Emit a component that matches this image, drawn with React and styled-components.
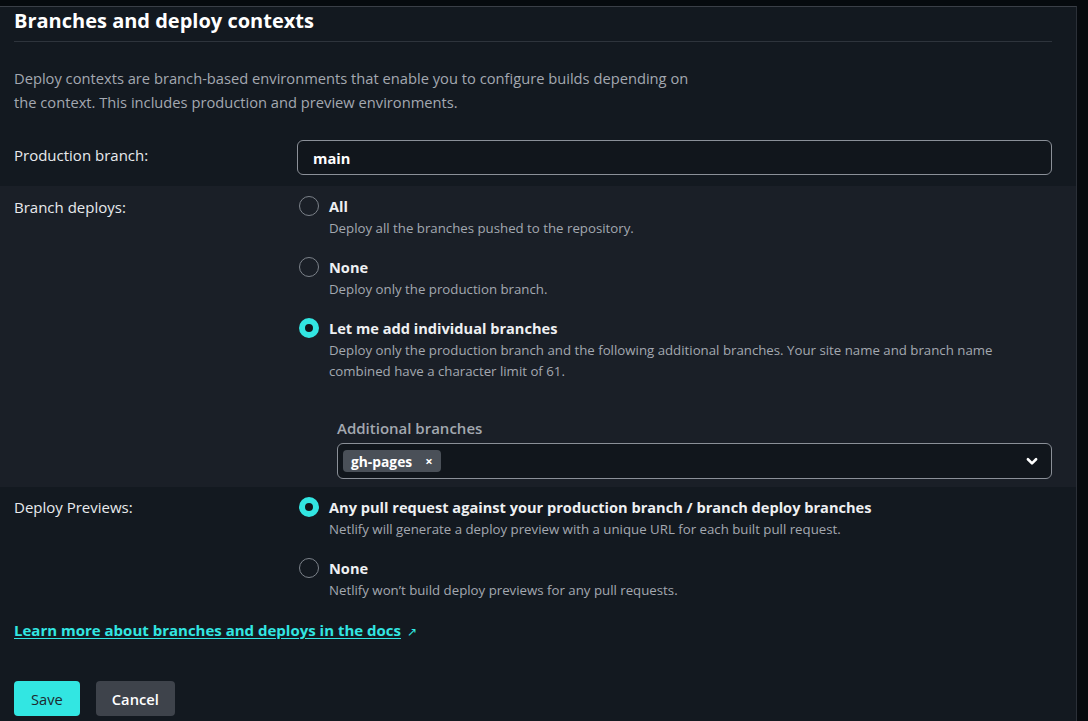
import React, { useState } from "react";
import styled, { createGlobalStyle } from "styled-components";

const GlobalStyle = createGlobalStyle`
  html, body {
    margin: 0;
    padding: 0;
    background: #060a0e;
  }
  body {
    font-family: "Open Sans", "Noto Sans", sans-serif;
    color: #e8eaed;
  }
  * { box-sizing: border-box; }
`;

const TEAL = "#32e6e2";

const Page = styled.div`
  padding-top: 6px;
  height: 721px;
  overflow: hidden;
`;

const Card = styled.section`
  width: 1077px;
  height: 715px;
  background: #131920;
  border-top: 1px solid #3a3f47;
  border-right: 1px solid #2b3038;
`;

const Header = styled.div`
  padding: 0 24px 0 14px;
`;

const Title = styled.h2`
  margin: 0;
  font-size: 20px;
  font-weight: 700;
  line-height: 26px;
  padding-top: 1px;
  padding-bottom: 7px;
  color: #fff;
  border-bottom: 1px solid #2e343c;
`;

const Description = styled.p`
  margin: 0;
  padding: 24px 0 0;
  max-width: 690px;
  font-size: 14.7px;
  line-height: 24px;
  color: #a3a8b0;
`;

const Row = styled.div`
  display: grid;
  grid-template-columns: 283px 1fr;
  padding: ${(p) => p.$pad || "8px 24px 8px 14px"};
  background: ${(p) => (p.$shaded ? "#1a1f27" : "transparent")};
`;

const Label = styled.div`
  font-size: 15px;
  line-height: 22px;
  padding-top: ${(p) => p.$top || "0px"};
  color: #e8eaed;
`;

const TextInput = styled.div`
  height: 35px;
  border: 1.5px solid #8b9098;
  border-radius: 6px;
  background: #11161c;
  padding: 0 15px;
  display: flex;
  align-items: center;
  font-size: 14.7px;
  font-weight: 700;
  color: #fff;
`;

const Options = styled.div`
  display: flex;
  flex-direction: column;
  gap: 16px;
`;

const Option = styled.label`
  display: grid;
  grid-template-columns: 20px 1fr;
  column-gap: 12px;
  cursor: pointer;
`;

const RadioDot = styled.span`
  width: 20px;
  height: 20px;
  margin-top: 2px;
  margin-left: 2px;
  border-radius: 50%;
  border: ${(p) => (p.$on ? `6px solid ${TEAL}` : "1.5px solid #7c828a")};
  background: ${(p) => (p.$on ? "#11161c" : "transparent")};
`;

const OptionBody = styled.div`
  display: flex;
  flex-direction: column;
`;

const OptionTitle = styled.span`
  font-size: 14.6px;
  font-weight: 700;
  line-height: 24px;
  color: #eef0f2;
`;

const OptionDesc = styled.span`
  font-size: 13.25px;
  line-height: 21px;
  color: #a3a8b0;
`;

const Extra = styled.div`
  margin: 35px 0 0 40px;
`;

const FieldLabel = styled.div`
  font-size: 15px;
  font-weight: 600;
  line-height: 22px;
  color: #a3a8b0;
  margin-bottom: 4px;
`;

const Select = styled.div`
  height: 36px;
  border: 1.5px solid #8b9098;
  border-radius: 6px;
  background: #11161c;
  display: flex;
  align-items: center;
  padding: 0 12px 0 5px;
`;

const Chip = styled.span`
  display: inline-flex;
  align-items: center;
  gap: 13px;
  height: 22px;
  padding: 0 8px;
  border-radius: 4px;
  background: #4a5058;
  font-size: 13.8px;
  font-weight: 700;
  color: #fff;
`;

const ChipX = styled.span`
  font-size: 13px;
  font-weight: 700;
  line-height: 1;
`;

const Chevron = styled.svg`
  margin-left: auto;
  width: 14px;
  height: 14px;
`;

const Footer = styled.div`
  padding: 10px 24px 0 14px;
`;

const DocLink = styled.a`
  font-size: 15px;
  font-weight: 700;
  line-height: 22px;
  color: ${TEAL};
  text-decoration: underline;
  text-underline-offset: 2px;
  cursor: pointer;
`;

const Arrow = styled.span`
  margin-left: 6px;
  font-size: 12px;
  color: ${TEAL};
`;

const Actions = styled.div`
  display: flex;
  gap: 16px;
  margin-top: 40px;
`;

const Button = styled.button`
  height: 35px;
  padding: 0 ${(p) => (p.$primary ? "17px" : "16px")};
  border: none;
  border-radius: 4px;
  font-family: inherit;
  font-size: 14.7px;
  font-weight: ${(p) => (p.$primary ? 400 : 600)};
  background: ${(p) => (p.$primary ? TEAL : "#3e434b")};
  color: ${(p) => (p.$primary ? "#1d2a2f" : "#fff")};
  cursor: pointer;
`;

const Radio = ({ on, title, desc, onSelect }) => (
  <Option onClick={onSelect}>
    <RadioDot $on={on} />
    <OptionBody>
      <OptionTitle>{title}</OptionTitle>
      {desc.map((d) => (
        <OptionDesc key={d}>{d}</OptionDesc>
      ))}
    </OptionBody>
  </Option>
);

const App = () => {
  const [branch, setBranch] = useState("some");
  const [preview, setPreview] = useState("any");

  return (
    <Page>
      <GlobalStyle />
      <Card>
        <Header>
          <Title>Branches and deploy contexts</Title>
          <Description>
            Deploy contexts are branch-based environments that enable you to configure builds depending
            on the context. This includes production and preview environments.
          </Description>
        </Header>

        <Row $pad="26px 24px 11px 14px">
          <Label $top="4px">Production branch:</Label>
          <TextInput>main</TextInput>
        </Row>

        <Row $shaded>
          <Label $top="2px">Branch deploys:</Label>
          <div>
            <Options>
              <Radio
                on={branch === "all"}
                onSelect={() => setBranch("all")}
                title="All"
                desc={["Deploy all the branches pushed to the repository."]}
              />
              <Radio
                on={branch === "none"}
                onSelect={() => setBranch("none")}
                title="None"
                desc={["Deploy only the production branch."]}
              />
              <Radio
                on={branch === "some"}
                onSelect={() => setBranch("some")}
                title="Let me add individual branches"
                desc={[
                  "Deploy only the production branch and the following additional branches. Your site name and branch name",
                  "combined have a character limit of 61.",
                ]}
              />
            </Options>
            <Extra>
              <FieldLabel>Additional branches</FieldLabel>
              <Select>
                <Chip>
                  gh-pages <ChipX>×</ChipX>
                </Chip>
                <Chevron viewBox="0 0 24 24" fill="none" stroke="#fff" strokeWidth="4.5" strokeLinecap="round" strokeLinejoin="round">
                  <path d="M5 9l7 7 7-7" />
                </Chevron>
              </Select>
            </Extra>
          </div>
        </Row>

        <Row>
          <Label $top="1px">Deploy Previews:</Label>
          <Options>
            <Radio
              on={preview === "any"}
              onSelect={() => setPreview("any")}
              title="Any pull request against your production branch / branch deploy branches"
              desc={["Netlify will generate a deploy preview with a unique URL for each built pull request."]}
            />
            <Radio
              on={preview === "none"}
              onSelect={() => setPreview("none")}
              title="None"
              desc={["Netlify won’t build deploy previews for any pull requests."]}
            />
          </Options>
        </Row>

        <Footer>
          <DocLink>Learn more about branches and deploys in the docs</DocLink>
          <Arrow>↗</Arrow>
          <Actions>
            <Button $primary>Save</Button>
            <Button>Cancel</Button>
          </Actions>
        </Footer>
      </Card>
    </Page>
  );
};

export default App;
